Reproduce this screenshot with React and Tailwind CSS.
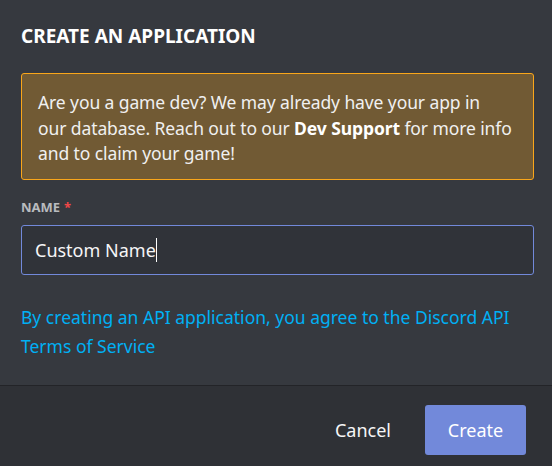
import React from "react";

export default function App() {
  return (
    <div
      className="w-[552px] h-[466px] bg-[#36393f] flex flex-col overflow-hidden"
      style={{ fontFamily: '"Noto Sans", "Open Sans", sans-serif' }}
    >
      <div className="flex-1 px-[21px] pt-[22px]">
        <h2 className="text-[19px] leading-[28px] font-bold text-white uppercase tracking-[0px]">
          Create an Application
        </h2>
        <div className="mt-[23px] w-[513px] h-[107px] rounded-[3px] border border-[#faa61a] bg-[#715a34] px-[16px] pt-[16px] text-[17.5px] leading-[25.5px] tracking-[-0.1px] text-[#f0f0f0] whitespace-nowrap">
          Are you a game dev? We may already have your app in
          <br />
          our database. Reach out to our <span className="font-bold text-white">Dev Support</span> for more info
          <br />
          and to claim your game!
        </div>
        <div className="mt-[18px] flex items-center text-[13px] leading-[18px] font-bold uppercase text-[#b9bbbe]">
          Name<span className="ml-[4px] text-[#f04747]">*</span>
        </div>
        <div className="mt-[9px] w-[513px] h-[50px] rounded-[3px] border border-[#7289da] bg-[#303339] flex items-center px-[13px]">
          <span className="text-[18px] text-[#f6f6f7]">Custom Name</span>
          <span className="w-px h-[24px] bg-white"></span>
        </div>
        <p className="mt-[28px] text-[17.5px] leading-[29px] text-[#00b0f4] w-[520px]">
          By creating an API application, you agree to the Discord API Terms of Service
        </p>
      </div>
      <div className="h-[81px] bg-[#2f3136] border-t border-[#232428] flex items-start justify-end pt-[19px] px-[26px]">
        <button className="px-[34px] h-[50px] text-[18px] text-[#f6f6f7]">Cancel</button>
        <button className="w-[101px] h-[50px] rounded-[3px] bg-[#7289da] text-[18px] text-white">
          Create
        </button>
      </div>
    </div>
  );
}
